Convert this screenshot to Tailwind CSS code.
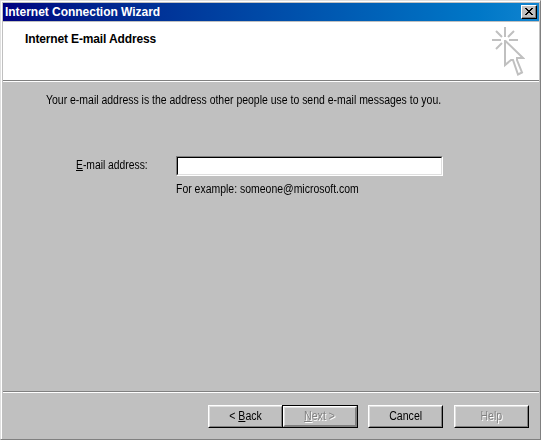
<!DOCTYPE html>
<html lang="en">
<head>
<meta charset="utf-8">
<title>Internet Connection Wizard</title>
<script src="https://cdn.jsdelivr.net/npm/@tailwindcss/browser@4"></script>
</head>
<body class="w-[541px] h-[440px] overflow-hidden bg-[#c0c0c0]">
<div class="w-[541px] h-[440px] border border-t-[#dfdfdf] border-l-[#dfdfdf] border-r-[#808080] border-b-[#808080] font-['Liberation_Sans',Arial,sans-serif] text-[12px] leading-[13px] text-black whitespace-nowrap">
 <div class="h-full border-t border-l border-white pt-px pl-px pr-px flex flex-col">
  <header class="h-[18px] shrink-0 flex items-center justify-between pl-[2px] pr-[2px] bg-linear-to-r from-[#000080] to-[#1084d0]">
   <h1 class="text-white font-bold tracking-[-0.03px]">Internet Connection Wizard</h1>
   <button aria-label="Close" class="w-4 h-[14px] bg-[#c0c0c0] border border-t-white border-l-white border-r-black border-b-black flex">
    <span class="w-full h-full border-r border-b border-[#808080] flex pl-[3px] pt-[2px]">
     <svg width="8" height="7" viewBox="0 0 8 7" shape-rendering="crispEdges"><path d="M0 0h2v1h1v1h2V1h1V0h2v1H7v1H6v1H5v1h1v1h1v1h1v1H6V6H5V5H3v1H2v1H0V6h1V5h1V4h1V3H2V2H1V1H0z"/></svg>
    </span>
   </button>
  </header>
  <section class="mt-px h-[58px] shrink-0 bg-white flex justify-between">
   <h2 class="pl-[22px] pt-[11px] font-bold tracking-[-0.14px]">Internet E-mail Address</h2>
   <svg class="mt-[5px] mr-[14px]" width="34" height="50" viewBox="0 0 34 50" fill="none" stroke="#c0c0c0" stroke-width="2"><path d="M14 0v10M1 13h9M18 13h9M5 4l6 6M23 4l-6 6M5 22l6-6M14 13v25l6-5h2l5 14.500 4-2-5-12.500v-2h6L14 13.500"/></svg>
  </section>
  <hr class="h-[2px] shrink-0 border-t border-b border-t-[#808080] border-b-white">
  <main class="h-[309px] shrink-0">
   <p class="pl-[43px] pt-3"><span class="inline-block origin-left scale-x-[0.872]">Your e-mail address is the address other people use to send e-mail messages to you.</span></p>
   <div class="mt-[49px] flex">
    <label for="email" class="w-[173px] pl-[73px] pt-[3px]"><span class="inline-block origin-left scale-x-[0.86]"><u>E</u>-mail address:</span></label>
    <div>
     <div class="w-[267px] h-5 border border-t-[#808080] border-l-[#808080] border-r-white border-b-white">
      <input id="email" class="block w-full h-full bg-white border border-t-black border-l-black border-r-[#dfdfdf] border-b-[#dfdfdf] outline-none">
     </div>
     <p class="mt-[7px]"><span class="inline-block origin-left scale-x-[0.872]">For example: someone@microsoft.com</span></p>
    </div>
   </div>
  </main>
  <hr class="h-[2px] shrink-0 border-t border-b border-t-[#808080] border-b-white">
  <footer class="pt-3 pr-[10px] flex justify-end">
   <button class="w-[75px] h-[23px] border border-t-white border-l-white border-r-black border-b-black"><span class="flex w-full h-full items-center justify-center border border-t-[#dfdfdf] border-l-[#dfdfdf] border-r-[#808080] border-b-[#808080]"><span class="scale-x-[0.88]">&lt; <u>B</u>ack</span></span></button>
   <button disabled class="-ml-px w-[76px] h-[23px] border border-black"><span class="block h-full border border-t-white border-l-white border-r-[#808080] border-b-[#808080]"><span class="flex w-full h-full items-center justify-center border border-t-[#dfdfdf] border-l-[#dfdfdf] border-r-[#808080] border-b-[#808080] text-[#808080] text-shadow-[1px_1px_0_#fff]"><span class="scale-x-[0.88]"><u>N</u>ext &gt;</span></span></span></button>
   <button class="ml-[10px] w-[75px] h-[23px] border border-t-white border-l-white border-r-black border-b-black"><span class="flex w-full h-full items-center justify-center border border-t-[#dfdfdf] border-l-[#dfdfdf] border-r-[#808080] border-b-[#808080]"><span class="scale-x-[0.88]">Cancel</span></span></button>
   <button disabled class="ml-[11px] w-[75px] h-[23px] border border-t-white border-l-white border-r-black border-b-black"><span class="flex w-full h-full items-center justify-center border border-t-[#dfdfdf] border-l-[#dfdfdf] border-r-[#808080] border-b-[#808080] text-[#808080] text-shadow-[1px_1px_0_#fff]"><span class="scale-x-[0.88]">Help</span></span></button>
  </footer>
 </div>
</div>
</body>
</html>
